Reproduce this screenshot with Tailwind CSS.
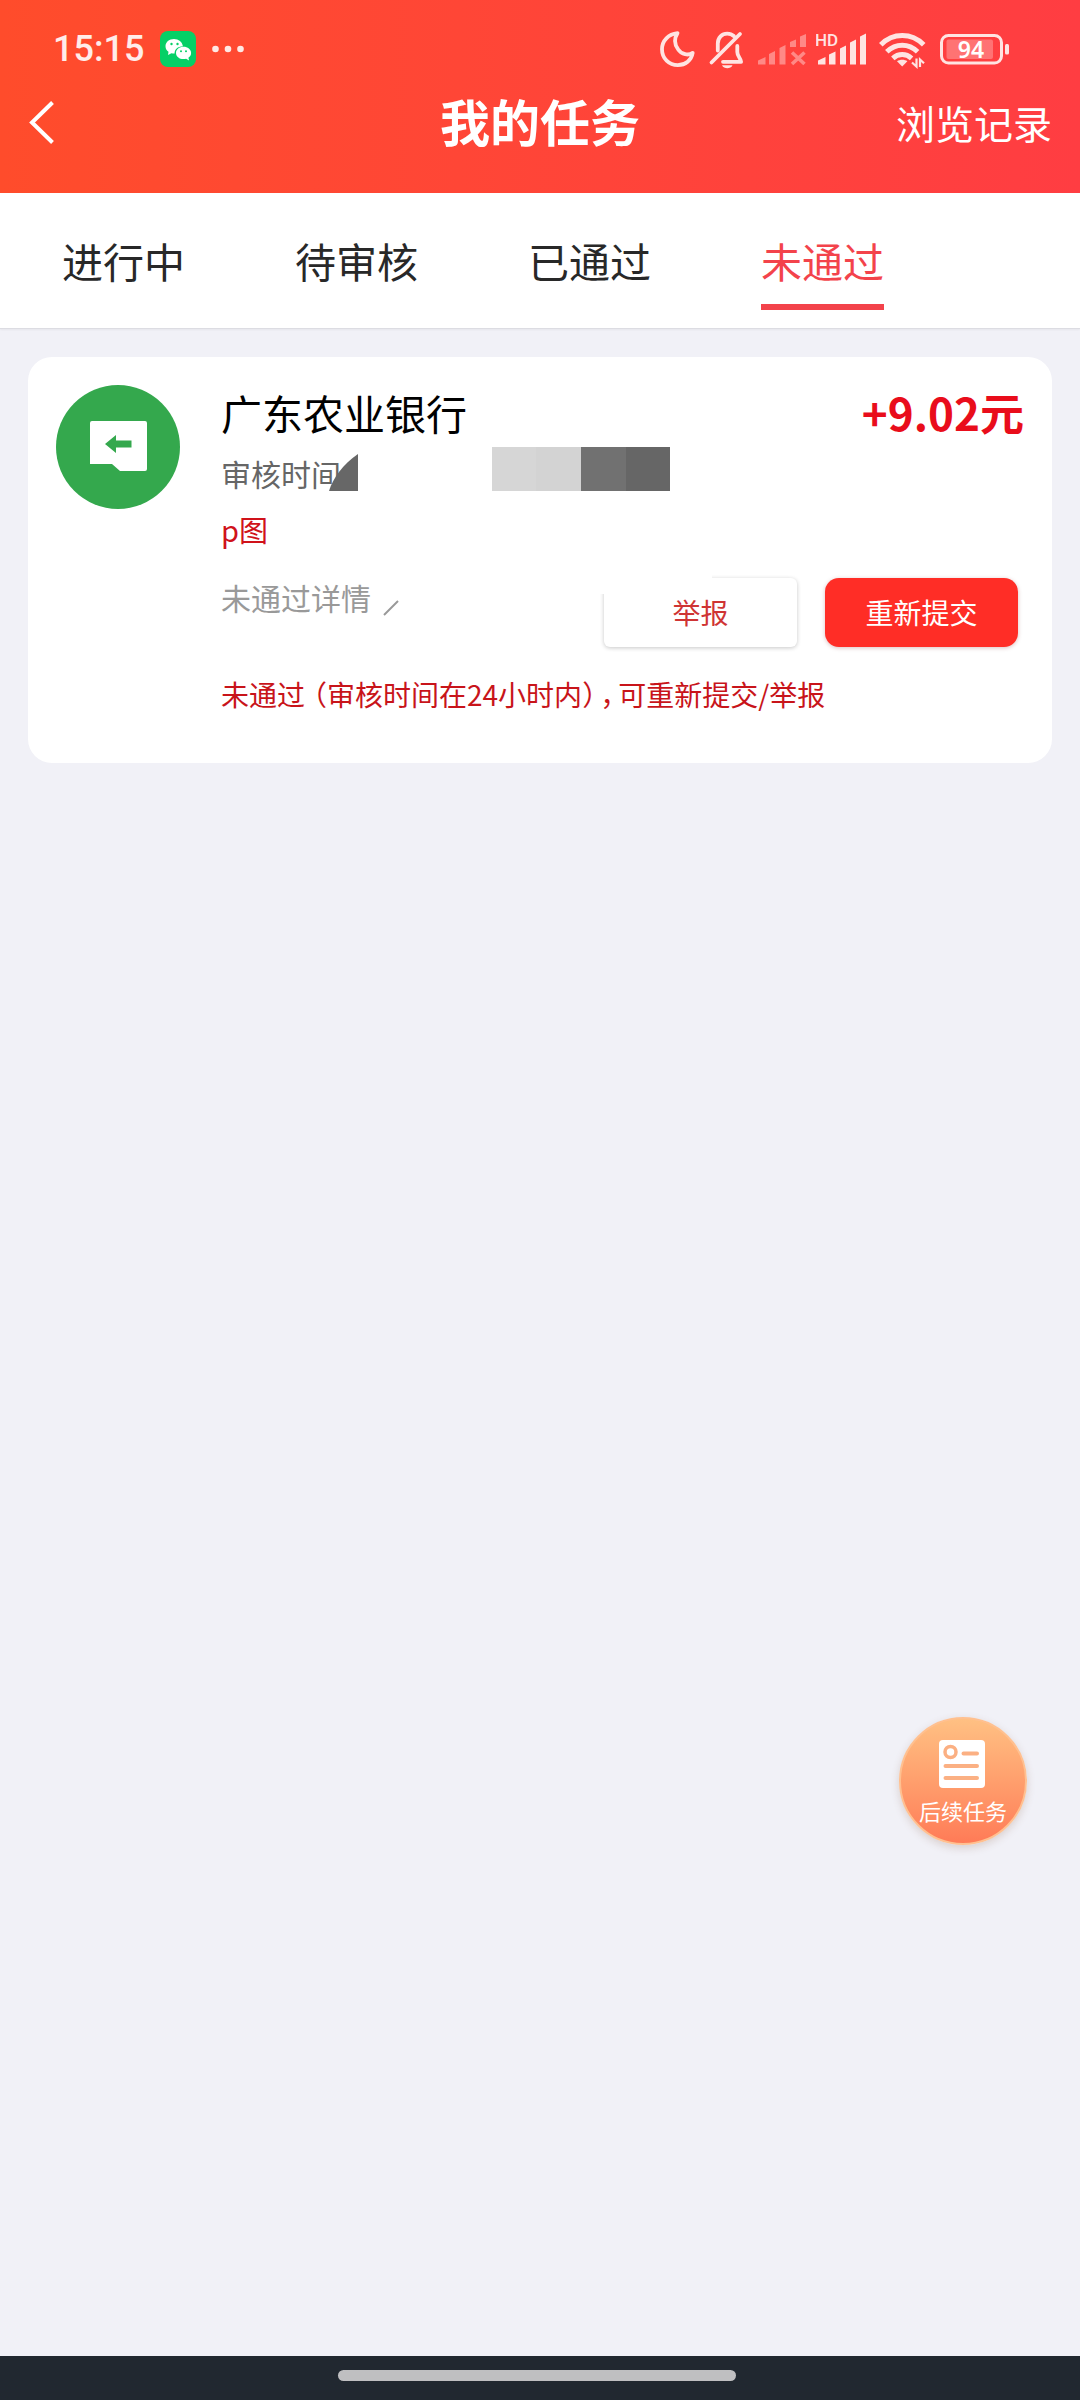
<!DOCTYPE html>
<html lang="zh-CN">
<head>
<meta charset="utf-8">
<meta name="viewport" content="width=device-width, initial-scale=1">
<title>我的任务</title>
<script src="https://cdn.jsdelivr.net/npm/@tailwindcss/browser@4"></script>
</head>
<body class="relative flex min-h-screen flex-col bg-[#f1f1f7] font-['Noto_Sans_CJK_SC',sans-serif] text-black">

<header class="bg-linear-to-r from-[#ff4c2b] to-[#ff3d42] pb-5 text-white">
  <!-- Status bar -->
  <div class="flex justify-between pt-7 pr-[70px] pl-[53px]">
    <div class="flex h-[42px] items-center gap-4">
      <span class="font-[Roboto,sans-serif] text-[36px] leading-[42px] font-medium text-white/90">15:15</span>
      <svg class="size-9" viewBox="0 0 36 36" aria-hidden="true">
        <rect width="36" height="36" rx="8" fill="#06d066"/>
        <path fill="#fff" d="M14 8C9 8 5.500 11.200 5.500 15.200c0 2.300 1.200 4.200 3 5.600L8 24l3.400-1.800c1 .3 2 .4 3.200.4-.2-4 3-7.200 8.300-7.400C22.300 11 18.600 8 14 8z"/>
        <path fill="#fff" d="M23.500 15.800c-4.200 0-7.500 2.700-7.500 6.100s3.300 6.200 7.500 6.200c.9 0 1.800-.1 2.600-.4l3 1.700-.7-2.700c1.700-1.200 2.700-2.900 2.700-4.800 0-3.400-3.400-6.100-7.600-6.100z"/>
        <g fill="#06d066"><circle cx="11.500" cy="13" r="1.200"/><circle cx="17.500" cy="13" r="1.200"/><circle cx="21" cy="20.200" r="1"/><circle cx="26" cy="20.200" r="1"/></g>
      </svg>
      <svg class="h-2 w-8" viewBox="0 0 32 8" fill="#ffe9e5" aria-hidden="true"><circle cx="3.500" cy="4" r="3.300"/><circle cx="16" cy="4" r="3.300"/><circle cx="28.500" cy="4" r="3.300"/></svg>
    </div>
    <div class="flex h-[42px] gap-3 text-[#ffe4e2]">
      <svg class="h-[42px] w-9" viewBox="0 0 36 42" fill="none" stroke="currentColor" stroke-width="3.800" stroke-linejoin="round" aria-hidden="true">
        <path d="M17.500 5.200C8.500 6.200 2 12.500 2 21.200 2 30.500 9 37.200 17.800 37.200c7.700 0 13.700-5 14.900-12.400C28.500 28 21.500 26.500 18 21.200c-3.600-5-4-10.600-.5-16z"/>
      </svg>
      <svg class="h-[42px] w-9" viewBox="0 0 36 42" fill="none" stroke="currentColor" stroke-width="3.800" stroke-linecap="round" stroke-linejoin="round" aria-hidden="true">
        <path d="M3.500 34.500 32 6M9.800 22.500V15.500C9.800 9.500 14 5.600 19.200 5.600c2.800 0 5 .9 6.600 2.400M29.300 18v6c0 4.500 3.500 6 3.800 9.800H15"/>
        <path d="M14 37.300h10.500c-1 2.200-3 3-5.200 3s-4.300-.8-5.300-3z" fill="currentColor" stroke="none"/>
      </svg>
      <svg class="h-[42px] w-12 overflow-visible" viewBox="0 0 48 42" fill="#fff" fill-opacity=".38" aria-hidden="true">
        <path d="M2 32.500 9.500 29v7.500H2zM13 26l6-3v13.500h-6zM23.500 20l6-3v19.500h-6zM34 14l6-2.500V19h-6zM44 8.500 50 6v13h-6z"/>
        <path d="m36 24.500 12.500 11.500M48.500 24.500 36 36" stroke="#fff" stroke-opacity=".38" stroke-width="3.600"/>
      </svg>
      <svg class="h-[42px] w-[52px]" viewBox="0 0 52 42" fill="currentColor" aria-hidden="true">
        <text x="-1" y="18" font-family="Roboto, sans-serif" font-size="17" font-weight="500">HD</text>
        <path d="M2 32.500 9.500 29v7.500H2zM13 26.500l6.500-3v13h-6.500zM24 20.500l6-3v19h-6zM34 14.500l6-3v25h-6zM44 8.500l6-3v31h-6z"/>
      </svg>
      <svg class="h-[42px] w-12 overflow-visible" viewBox="0 0 48 42" fill="none" stroke="currentColor" stroke-width="5" aria-hidden="true">
        <path d="M.8 16.800C13 4.500 31.500 4.500 43.700 16.800M6.800 23.800c9-8.800 21.800-8.800 30.800 0M12.800 30.300c5.500-5 13.300-5 18.800 0"/>
        <path d="M17 33.200c3-2 7.500-2 10.400 0L22.200 38.500z" fill="currentColor" stroke="none"/>
        <path d="M36.500 30.500v8L32 34.500M40 39v-7.500l4 3.800" stroke-width="2.200"/>
      </svg>
      <svg class="h-[42px] w-[70px]" viewBox="0 0 70 42" aria-hidden="true">
        <rect x="1.500" y="7.500" width="60" height="27.500" rx="7" fill="none" stroke="currentColor" stroke-width="3"/>
        <rect x="6.500" y="11.500" width="46.500" height="19.500" rx="2" fill="#fff" fill-opacity=".27"/>
        <rect x="65" y="16" width="4" height="10.500" rx="1.500" fill="currentColor"/>
        <text x="31" y="29.500" text-anchor="middle" fill="#fff" font-family="'Noto Sans', sans-serif" font-size="23" font-weight="600">94</text>
      </svg>
    </div>
  </div>

  <!-- Title bar -->
  <div class="grid h-[103px] grid-cols-[1fr_auto_1fr] items-center px-7">
    <button type="button" aria-label="返回" class="h-12 w-8 justify-self-start">
      <svg class="h-12 w-8" viewBox="0 0 32 48" fill="none" stroke="#fff" stroke-width="4" aria-hidden="true"><path d="M24.500 4.500 4 24.500l20.500 20"/></svg>
    </button>
    <h1 class="pb-1 text-[50px] leading-[68px] font-bold">我的任务</h1>
    <a href="#" class="justify-self-end text-[39px] leading-[56px]">浏览记录</a>
  </div>
</header>

<nav class="flex h-[136px] gap-[110px] border-b border-[#dcdce2] bg-white pt-8 pl-[62px] text-[41px] leading-[70px] whitespace-nowrap text-[#282828] shadow-xs">
  <a href="#">进行中</a>
  <a href="#">待审核</a>
  <a href="#">已通过</a>
  <a href="#" aria-current="page" class="h-[85px] border-b-6 border-[#f3434b] text-[#f3434b]">未通过</a>
</nav>

<main class="flex-1 px-7 pt-7">
  <article class="flex gap-[41px] rounded-[24px] bg-white px-7 pt-7 pb-11">
    <svg class="size-[124px] shrink-0" viewBox="0 0 124 124" aria-hidden="true">
      <circle cx="62" cy="62" r="62" fill="#34a84d"/>
      <path fill="#fff" d="M36 36H89a2 2 0 0 1 2 2V84a2 2 0 0 1-2 2H64l-8-7H34V38a2 2 0 0 1 2-2z"/>
      <path fill="#34a84d" d="m49 59 11-9v5.500h15.500v7H60V68z"/>
    </svg>
    <div class="min-w-0 flex-1">
      <div class="flex h-[58px] items-start justify-between leading-[54px]">
        <h2 class="text-[41px]">广东农业银行</h2>
        <strong class="text-[44px] font-bold text-[#e90d1b]">+9.02元</strong>
      </div>
      <div class="flex h-16 items-start gap-[151px] pt-1">
        <p class="relative text-[30px] leading-[52px] text-[#666]">审核时间
          <svg class="absolute top-[7px] left-[108px] h-[37px] w-[29px]" viewBox="0 0 29 37" fill="#676767" aria-hidden="true"><path d="M0 37C4 24 14 10 29 0V37z"/></svg>
        </p>
        <div class="flex h-11" aria-hidden="true">
          <span class="w-11 bg-[#d6d6d6]"></span>
          <span class="w-[45px] bg-[#d3d3d3]"></span>
          <span class="w-[45px] bg-[#717171]"></span>
          <span class="w-11 bg-[#666]"></span>
        </div>
      </div>
      <p class="pb-1 text-[29px] leading-[44px] text-[#d0121a]">p图</p>
      <div class="mt-[23px] flex items-start justify-between pr-1.5">
        <a href="#" class="flex items-end gap-3 text-[30px] leading-[38px] text-[#999]">未通过详情
          <svg class="h-4 w-4" viewBox="0 0 16 16" fill="none" stroke="#999" stroke-width="2" aria-hidden="true"><path d="M1 15 15 1"/></svg>
        </a>
        <div class="flex gap-7 text-[28px]">
          <button type="button" class="relative h-[69px] w-[193px] rounded-md bg-white pb-0.5 text-[#cf3434] shadow-[0_1px_4px_rgba(0,0,0,0.22)]">
            <span class="absolute -top-1 -left-1 h-5 w-28 bg-white"></span>
            <span class="relative">举报</span>
          </button>
          <button type="button" class="h-[69px] w-[193px] rounded-[14px] bg-[#ff2d26] pb-0.5 text-white shadow-[0_1px_4px_rgba(120,0,0,0.25)]">重新提交</button>
        </div>
      </div>
      <p class="mt-6 pb-0.5 text-[28px] leading-[46px] text-[#c8141a]">未通过<span class="pl-2 [font-feature-settings:'halt']">（</span>审核时间在24小时内<span class="pr-1 [font-feature-settings:'halt']">）</span><span class="pr-1 [font-feature-settings:'halt']">，</span>可重新提交/举报</p>
    </div>
  </article>
</main>

<!-- Floating action -->
<button type="button" class="absolute top-[1717px] right-[53px] flex size-32 flex-col items-center rounded-full border-2 border-[#ffc090] bg-linear-to-b from-[#ffc083] to-[#ff7b57] pt-[21px] text-white shadow-[0_3px_8px_rgba(120,70,40,0.2)]">
  <svg class="h-12 w-12" viewBox="0 0 48 48" aria-hidden="true">
    <rect width="46" height="48" rx="4" fill="#fff"/>
    <g fill="none" stroke="#fbb083" stroke-width="3.500" stroke-linecap="round"><circle cx="11.500" cy="12" r="5.500"/><path d="M24.500 13.500H38M6.500 26H38M6.500 38H38" stroke-width="4"/></g>
  </svg>
  <span class="mt-1.5 text-[22px] leading-8">后续任务</span>
</button>

<!-- Gesture bar -->
<footer class="flex h-11 justify-center bg-[#212830] pt-3.5 pr-1.5">
  <div class="h-[11px] w-[37%] rounded-full bg-[#bfbfc1]"></div>
</footer>
</body>
</html>
